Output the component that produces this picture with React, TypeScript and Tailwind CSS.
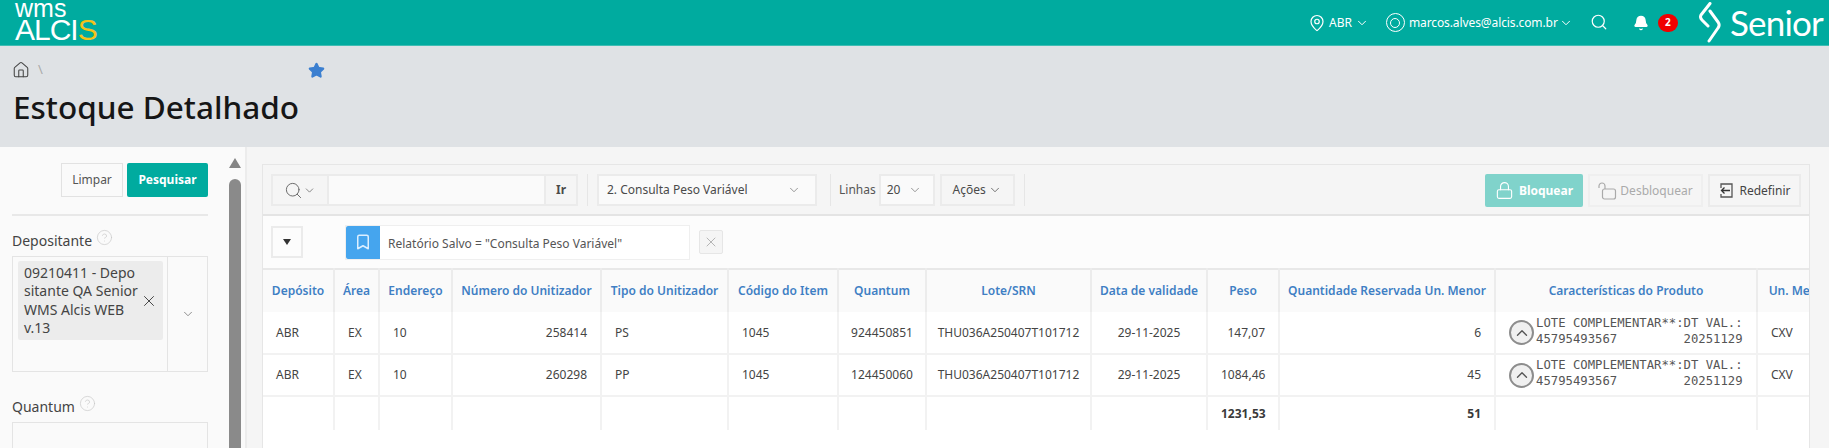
import { Bell, Bookmark, ChevronDown, ChevronUp, CircleHelp, House, Lock, MapPin, Search, Star, X } from 'lucide-react';

const columns = [
  { title: 'Depósito', width: 'w-[71px]' },
  { title: 'Área', width: 'w-[45px]' },
  { title: 'Endereço', width: 'w-[73px]' },
  { title: 'Número do Unitizador', width: 'w-[149px]' },
  { title: 'Tipo do Unitizador', width: 'w-[127px]' },
  { title: 'Código do Item', width: 'w-[110px]' },
  { title: 'Quantum', width: 'w-[88px]' },
  { title: 'Lote/SRN', width: 'w-[165px]' },
  { title: 'Data de validade', width: 'w-[116px]' },
  { title: 'Peso', width: 'w-[72px]' },
  { title: 'Quantidade Reservada Un. Menor', width: 'w-[216px]' },
  { title: 'Características do Produto', width: 'w-[262px]' },
  { title: 'Un. Medida', width: 'w-[90px]' },
];

const rows = [
  { tipo: 'PS', unitizador: '258414', quantum: '924450851', peso: '147,07', qtd: '6' },
  { tipo: 'PP', unitizador: '260298', quantum: '124450060', peso: '1084,46', qtd: '45' },
];

const td = 'border-r-2 border-b-2 border-[#f2f2f2] px-[13px] text-[12px] text-[#444]';

function SeniorMark() {
  return (
    <svg width="22" height="41" viewBox="0 0 22 41" fill="none" stroke="white" strokeWidth="3" strokeLinecap="round" strokeLinejoin="round">
      <path d="M11 1.5 L2 13 C1 15 1.5 16.5 3 18 L9 24" />
      <path d="M11 9 L19 20 C20.5 22 20.5 24 19 26 L10 39" />
    </svg>
  );
}

function ResetIcon() {
  return (
    <svg width="17" height="17" viewBox="0 0 17 17" fill="none" strokeWidth="1.3">
      <path d="M3 6V2h11v13H3v-3" stroke="#555" />
      <path d="M12 8.5H3.5M6.5 5.5l-3 3 3 3" stroke="#333" />
    </svg>
  );
}

function HelpIcon() {
  return <CircleHelp size={17} strokeWidth={1} className="text-[#c9c9c9] -mt-[6px] ml-1" />;
}

export default function App() {
  return (
    <div className="w-[1833px] h-[448px] overflow-hidden bg-white font-['Noto_Sans',sans-serif]">
      <div className="w-[1829px] h-[448px] flex flex-col bg-[#f5f5f5]">
        {/* Top bar */}
        <header className="h-[46px] shrink-0 flex items-center bg-[#00ab9f] border-b border-[#3fbdb3] text-white">
          <div className="ml-[15px] -mt-[3px] flex flex-col font-['Liberation_Sans',sans-serif]">
            <span className="text-[25px] leading-[17px]">wms</span>
            <span className="text-[30px] leading-[25px] tracking-[-1px]">
              ALCI<span className="text-[#f6c21a]">S</span>
            </span>
          </div>
          <div className="ml-auto flex items-center h-full text-[12px]">
            <MapPin size={18} strokeWidth={1.6} />
            <span className="ml-[3px]">ABR</span>
            <ChevronDown size={14} strokeWidth={1.7} className="ml-[3px]" />
            <span className="ml-[17px] w-[19px] h-[19px] rounded-full border-[1.5px] border-white flex items-center justify-center">
              <span className="w-[10px] h-[10px] rounded-full border-[1.5px] border-white" />
            </span>
            <span className="ml-[4px] w-[146px] text-[12px] tracking-[-0.1px] whitespace-nowrap">marcos.alves@alcis.com.br</span>
            <ChevronDown size={14} strokeWidth={1.7} className="ml-[4px]" />
            <Search size={18} strokeWidth={1.6} className="ml-[17px] -mt-[2px]" />
            <Bell size={16} fill="white" className="ml-[25px]" />
            <span className="ml-[9px] w-[20px] h-[18px] rounded-full bg-[#f00000] text-[10px] font-bold flex items-center justify-center">2</span>
            <span className="ml-[21px]"><SeniorMark /></span>
            <span className="ml-[9px] mr-[6px] font-['Lato',sans-serif] font-normal text-[35px] tracking-[-0.8px] leading-none">Senior</span>
          </div>
        </header>

        {/* Page title */}
        <div className="h-[101px] shrink-0 bg-[#dfe2e5] pl-[12px] pt-[15px]">
          <div className="flex items-center h-[18px] text-[#444]">
            <House size={18} strokeWidth={1.4} />
            <span className="ml-[8px] text-[13px] text-[#aaa]">\</span>
            <Star size={17} fill="#3b7fd0" stroke="#3b7fd0" className="ml-[265px]" />
          </div>
          <h1 className="mt-[9px] ml-[1px] text-[31.5px] leading-[38px] font-medium text-[#161616]">Estoque Detalhado</h1>
        </div>

        <div className="flex-1 flex min-h-0">
          {/* Filters */}
          <aside className="w-[247px] shrink-0 flex bg-[#fafafa] border-r-2 border-[#ececec]">
            <div className="w-[196px] ml-[12px] pt-[16px] shrink-0">
              <div className="flex justify-end gap-[4px] text-[12px] pb-[17px] border-b-2 border-[#e8e8e8]">
                <button className="w-[62px] h-[34px] border border-[#e2e2e2] text-[#555]">Limpar</button>
                <button className="w-[81px] h-[34px] bg-[#00ab9f] rounded-[2px] text-white font-bold">Pesquisar</button>
              </div>
              <div className="mt-[15px] flex items-center h-[18px] text-[14px] text-[#444]">
                Depositante
                <HelpIcon />
              </div>
              <div className="mt-[7px] h-[116px] flex border border-[#e4e4e4]">
                <div className="w-[155px] border-r border-[#e4e4e4] p-[4px] pl-[5px]">
                  <div className="h-[79px] flex items-center rounded-[2px] bg-[#ececec] pl-[6px] pr-[5px] text-[14px] leading-[18.5px] text-[#444]">
                    <span className="w-[116px]">09210411 - Depo sitante QA Senior WMS Alcis WEB v.13</span>
                    <X size={18} strokeWidth={1.3} className="shrink-0 ml-auto" />
                  </div>
                </div>
                <div className="flex-1 flex items-center justify-center">
                  <ChevronDown size={14} strokeWidth={1.4} className="text-[#777]" />
                </div>
              </div>
              <div className="mt-[25px] flex items-center h-[18px] text-[14px] text-[#444]">
                Quantum
                <HelpIcon />
              </div>
              <div className="mt-[7px] h-[60px] border border-[#e4e4e4]" />
            </div>
            <div className="ml-[20px] w-[13px] shrink-0 flex flex-col items-center pt-[11px]">
              <span className="w-0 h-0 border-l-[6.5px] border-r-[6.5px] border-b-[10px] border-l-transparent border-r-transparent border-b-[#858585]" />
              <span className="mt-[11px] w-[12px] flex-1 rounded-t-[6px] bg-[#8a8a8a]" />
            </div>
          </aside>

          {/* Report */}
          <main className="flex-1 min-w-0 pl-[15px] pt-[17px] pr-[19px]">
            <div className="h-full border border-b-0 border-[#e6e6e6] bg-white overflow-hidden">
              <div className="h-[51px] flex items-start pt-[9px] pl-[8px] pr-[8px] bg-[#f5f5f5] border-b-2 border-[#e4e4e4] text-[12px] text-[#4a4a4a]">
                <div className="w-[307px] h-[32px] flex border-2 border-[#ebebeb]">
                  <div className="w-[56px] flex items-center justify-center border-r-2 border-[#ebebeb] text-[#666]">
                    <Search size={19} strokeWidth={1.2} />
                    <ChevronDown size={13} strokeWidth={1.4} />
                  </div>
                  <div className="flex-1 bg-[#fafafa]" />
                  <div className="w-[32px] flex items-center justify-center border-l-2 border-[#ebebeb] font-bold">Ir</div>
                </div>
                <span className="ml-[9px] w-px h-[32px] bg-[#e6e6e6]" />
                <div className="ml-[9px] w-[220px] h-[32px] flex items-center justify-between pl-[8px] pr-[14px] bg-[#fafafa] border-2 border-[#ebebeb]">
                  2. Consulta Peso Variável
                  <ChevronDown size={14} strokeWidth={1.3} className="text-[#777]" />
                </div>
                <span className="ml-[13px] w-px h-[32px] bg-[#e6e6e6]" />
                <span className="ml-[8px] leading-[32px] text-[#555]">Linhas</span>
                <div className="ml-[3px] w-[56px] h-[32px] flex items-center justify-between pl-[6px] pr-[11px] border-2 border-[#ebebeb] bg-[#fafafa]">
                  20
                  <ChevronDown size={14} strokeWidth={1.3} className="text-[#777]" />
                </div>
                <div className="ml-[5px] w-[75px] h-[32px] flex items-center justify-center gap-[2px] border-2 border-[#ebebeb]">
                  Ações
                  <ChevronDown size={14} strokeWidth={1.3} />
                </div>
                <span className="ml-[9px] w-px h-[32px] bg-[#e6e6e6]" />
                <div className="ml-auto flex gap-[5px]">
                  <button className="w-[98px] h-[33px] rounded-[2px] bg-[#80d3cb] text-white font-bold flex items-center justify-center gap-[5px]">
                    <Lock size={19} strokeWidth={1.4} />
                    Bloquear
                  </button>
                  <button className="w-[115px] h-[33px] border-2 border-[#efefef] text-[#aaa] flex items-center justify-center gap-[3px]">
                    <svg width="19" height="18" viewBox="0 0 19 18" fill="none" stroke="#aaa" strokeWidth="1.2">
                      <path d="M1 6V4a3 3 0 0 1 6 0v3" />
                      <rect x="4.5" y="7" width="13" height="10" rx="2" />
                    </svg>
                    Desbloquear
                  </button>
                  <button className="w-[93px] h-[33px] border-2 border-[#ebebeb] text-[#444] flex items-center justify-center gap-[4px]">
                    <ResetIcon />
                    Redefinir
                  </button>
                </div>
              </div>

              <div className="h-[52px] flex items-center pl-[8px] bg-[#fcfcfc] text-[12px] text-[#555]">
                <div className="w-[32px] h-[32px] flex items-center justify-center border-2 border-[#ebebeb]">
                  <span className="w-0 h-0 border-l-[4.5px] border-r-[4.5px] border-t-[6px] border-l-transparent border-r-transparent border-t-[#333]" />
                </div>
                <div className="ml-[42px] w-[345px] h-[35px] flex bg-white border border-[#efefef]">
                  <div className="w-[34px] flex items-center justify-center rounded-l-[2px] bg-[#45a5ee]">
                    <Bookmark size={18} strokeWidth={2} className="text-[#dcefff]" />
                  </div>
                  <div className="pl-[8px] leading-[35px]">Relatório Salvo = "Consulta Peso Variável"</div>
                </div>
                <div className="ml-[9px] w-[24px] h-[24px] flex items-center justify-center bg-[#f5f5f5] border border-[#e6e6e6] rounded-[2px]">
                  <X size={16} strokeWidth={1.3} className="text-[#aaa]" />
                </div>
              </div>

              <table className="table-fixed border-collapse w-[1584px]">
                <thead>
                  <tr className="h-[43px] bg-[#fafafa] border-t-2 border-[#e8e8e8]">
                    {columns.map((col) => (
                      <th key={col.title} className={`${col.width} border-r-2 border-[#ececec] px-0 text-center text-[12px] font-semibold text-[#3f7fc4] whitespace-nowrap overflow-hidden`}>
                        {col.title}
                      </th>
                    ))}
                  </tr>
                </thead>
                <tbody>
                  {rows.map((row) => (
                    <tr key={row.unitizador} className="h-[42px]">
                      <td className={td}>ABR</td>
                      <td className={td}>EX</td>
                      <td className={td}>10</td>
                      <td className={`${td} text-right`}>{row.unitizador}</td>
                      <td className={td}>{row.tipo}</td>
                      <td className={td}>1045</td>
                      <td className={`${td} text-center !px-0`}>{row.quantum}</td>
                      <td className={`${td} text-center !px-0`}>THU036A250407T101712</td>
                      <td className={`${td} text-center !px-0`}>29-11-2025</td>
                      <td className={`${td} text-right`}>{row.peso}</td>
                      <td className={`${td} text-right`}>{row.qtd}</td>
                      <td className={`${td} !px-0`}>
                        <div className="flex items-center pl-[13px]">
                          <span className="w-[25px] h-[25px] shrink-0 rounded-full border-2 border-[#8d8d8d] bg-[#f0f0f0] flex items-center justify-center">
                            <ChevronUp size={18} strokeWidth={1.8} className="text-[#555]" />
                          </span>
                          <pre className="ml-[2px] -mt-[4px] font-['DejaVu_Sans_Mono',monospace] text-[12.25px] leading-[16px] text-[#555]">
                            {'LOTE COMPLEMENTAR**:DT VAL.:\n45795493567         20251129'}
                          </pre>
                        </div>
                      </td>
                      <td className={td}>CXV</td>
                    </tr>
                  ))}
                  <tr className="h-[34px] font-bold">
                    {columns.map((col) => (
                      <td key={col.title} className="border-r-2 border-[#f2f2f2] px-[13px] text-right text-[12px] font-bold text-[#3a3a3a]">
                        {col.title === 'Peso' ? '1231,53' : col.title === 'Quantidade Reservada Un. Menor' ? '51' : ''}
                      </td>
                    ))}
                  </tr>
                </tbody>
              </table>
            </div>
          </main>
        </div>
      </div>
    </div>
  );
}
